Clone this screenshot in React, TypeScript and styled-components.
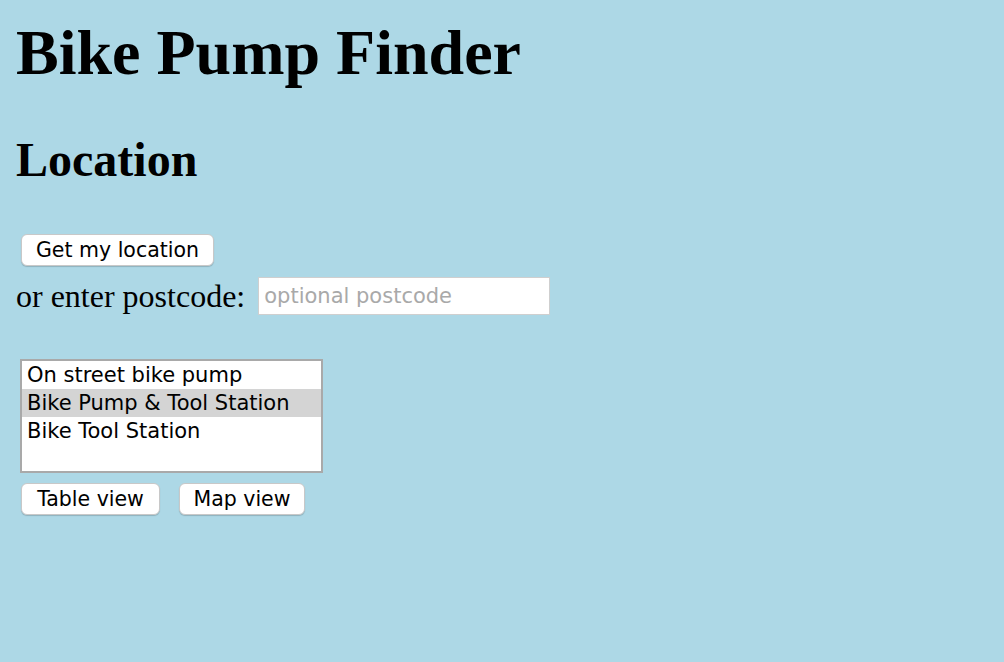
import React from "react";
import styled, { createGlobalStyle } from "styled-components";

const Global = createGlobalStyle`
  html, body { margin: 0; padding: 0; }
  body {
    background: #add8e6;
    font-family: "Liberation Serif", "Times New Roman", serif;
    color: #000;
    min-height: 662px;
  }
`;

const UI_FONT = `"DejaVu Sans", "Liberation Sans", Arial, sans-serif`;

const Page = styled.div`
  padding: 16px 16px 0 16px;
  display: flex;
  flex-direction: column;
  align-items: flex-start;
`;

const Title = styled.h1`
  margin: 0;
  font-size: 64px;
  line-height: 74px;
  font-weight: bold;
`;

const Heading = styled.h2`
  margin: 42px 0 0 0;
  font-size: 48px;
  line-height: 55px;
  font-weight: bold;
`;

const Button = styled.button<{ $width: number }>`
  box-sizing: border-box;
  font-family: ${UI_FONT};
  font-size: 20.5px;
  width: ${(p) => p.$width}px;
  height: 32px;
  padding: 0;
  background: #fff;
  color: #000;
  border: 1px solid #c8c8c8;
  border-radius: 6px;
  box-shadow: 0 1px 1px rgba(0, 0, 0, 0.18);
  display: flex;
  align-items: center;
  justify-content: center;
  cursor: pointer;
`;

const LocateButton = styled(Button)`
  margin: 47px 0 0 5px;
`;

const PostcodeRow = styled.div`
  display: flex;
  align-items: center;
  margin-top: 11px;
  gap: 13px;
`;

const Label = styled.label`
  font-size: 32px;
  line-height: 38px;
`;

const Input = styled.input`
  box-sizing: border-box;
  width: 292px;
  height: 38px;
  border: 1px solid #cfcfcf;
  background: #fff;
  padding: 0 5px;
  font-family: ${UI_FONT};
  font-size: 21px;
  outline: none;
  &::placeholder { color: #a9a9a9; }
`;

const List = styled.div`
  box-sizing: border-box;
  margin: 44px 0 0 4px;
  width: 303px;
  height: 114px;
  border: 2px solid #a9a9a9;
  background: #fff;
  display: flex;
  flex-direction: column;
`;

const Option = styled.div<{ $selected?: boolean }>`
  font-family: ${UI_FONT};
  font-size: 21px;
  line-height: 28px;
  height: 28px;
  padding-left: 5px;
  background: ${(p) => (p.$selected ? "#d4d4d4" : "transparent")};
  white-space: nowrap;
`;

const ViewRow = styled.div`
  display: flex;
  gap: 19px;
  margin: 10px 0 0 5px;
`;

export default function App() {
  return (
    <>
      <Global />
      <Page>
        <Title>Bike Pump Finder</Title>
        <Heading>Location</Heading>
        <LocateButton $width={193}>Get my location</LocateButton>
        <PostcodeRow>
          <Label>or enter postcode:</Label>
          <Input placeholder="optional postcode" />
        </PostcodeRow>
        <List>
          <Option>On street bike pump</Option>
          <Option $selected>Bike Pump &amp; Tool Station</Option>
          <Option>Bike Tool Station</Option>
        </List>
        <ViewRow>
          <Button $width={139}>Table view</Button>
          <Button $width={126}>Map view</Button>
        </ViewRow>
      </Page>
    </>
  );
}
